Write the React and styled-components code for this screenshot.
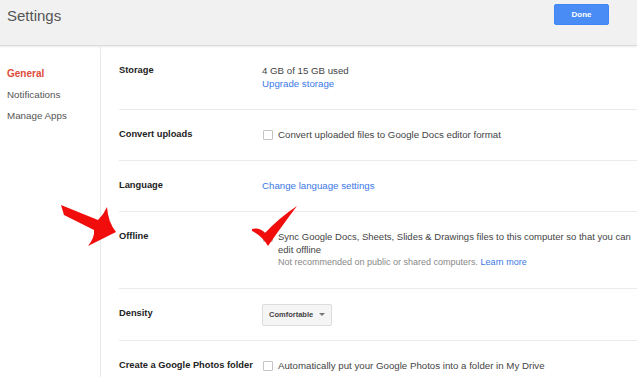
import React from 'react';
import styled, { createGlobalStyle } from 'styled-components';

const GlobalStyle = createGlobalStyle`
    body {
        margin: 0;
        background: #fff;
        font-family: "Liberation Sans", Arial, sans-serif;
        color: #444;
    }
`;

const menu = [
    { name: 'General', active: true },
    { name: 'Notifications' },
    { name: 'Manage Apps' },
];

function Checkbox() {
    return <Box />;
}

function App() {
    return (
        <Page>
            <GlobalStyle />
            <Header>
                <Title>Settings</Title>
                <DoneButton>Done</DoneButton>
            </Header>
            <Body>
                <Sidebar>
                    {menu.map(item => (
                        <MenuItem key={item.name} active={item.active}>{item.name}</MenuItem>
                    ))}
                </Sidebar>
                <Content>
                    <Row>
                        <Label>Storage</Label>
                        <Value>
                            <Line>4 GB of 15 GB used</Line>
                            <Link>Upgrade storage</Link>
                        </Value>
                    </Row>
                    <Row>
                        <Label>Convert uploads</Label>
                        <Value>
                            <CheckLine>
                                <Checkbox />
                                <span>Convert uploaded files to Google Docs editor format</span>
                            </CheckLine>
                        </Value>
                    </Row>
                    <Row>
                        <Label>Language</Label>
                        <Value>
                            <Link>Change language settings</Link>
                        </Value>
                    </Row>
                    <Row>
                        <Label>Offline</Label>
                        <Value>
                            <CheckLine>
                                <Checkbox />
                                <WideText>
                                    <Line>Sync Google Docs, Sheets, Slides &amp; Drawings files to this computer so that you can edit offline</Line>
                                    <Hint>Not recommended on public or shared computers. <Link>Learn more</Link></Hint>
                                </WideText>
                            </CheckLine>
                        </Value>
                    </Row>
                    <Row>
                        <Label>Density</Label>
                        <Value>
                            <Select>
                                Comfortable
                                <Caret />
                            </Select>
                        </Value>
                    </Row>
                    <Row>
                        <Label>Create a Google Photos folder</Label>
                        <Value>
                            <CheckLine>
                                <Checkbox />
                                <span>Automatically put your Google Photos into a folder in My Drive</span>
                            </CheckLine>
                        </Value>
                    </Row>
                </Content>
            </Body>
            <Marks width="640" height="377" viewBox="0 0 640 377">
                <path
                    d="M61,205 L98,220 Q104,214 107,207 Q108,222 116,232 L88,246 Q95,237 94,230 L64,215 Z"
                    fill="#f20d0d"
                />
                <path
                    d="M252,229 Q260,227 265,233 Q279,218 297,206 Q284,223 268,246 Q262,236 252,231 Z"
                    fill="#f20d0d"
                />
            </Marks>
        </Page>
    );
}

const Page = styled.div`
    position: relative;
    width: 637px;
    height: 377px;
    overflow: hidden;
`;
const Header = styled.header`
    height: 45px;
    display: flex;
    align-items: flex-start;
    justify-content: space-between;
    padding: 0 28px 0 7px;
    background: #f1f1f1;
    border-bottom: 1px solid #dadada;
    box-shadow: 0 1px 2px rgba(0, 0, 0, 0.08);
`;
const Title = styled.h1`
    margin: 0;
    font-size: 15px;
    font-weight: 400;
    line-height: 32px;
    color: #555;
`;
const DoneButton = styled.button`
    margin-top: 4px;
    width: 55px;
    height: 21px;
    padding: 0;
    border: 1px solid #3f86f5;
    border-radius: 2px;
    background: #4a8cf6;
    color: #fff;
    font-family: inherit;
    font-size: 8px;
    font-weight: 700;
`;
const Body = styled.div`
    display: flex;
`;
const Sidebar = styled.nav`
    width: 101px;
    flex-shrink: 0;
    min-height: 331px;
    padding-top: 17px;
    box-sizing: border-box;
    border-right: 1px solid #e8e8e8;
`;
const MenuItem = styled.div`
    padding-left: 7px;
    font-size: ${p => (p.active ? '10px' : '9.8px')};
    line-height: 21px;
    font-weight: ${p => (p.active ? 700 : 400)};
    color: ${p => (p.active ? '#dd4b39' : '#555')};
`;
const Content = styled.main`
    flex: 1;
    margin-left: 18px;
`;
const Row = styled.section`
    display: flex;
    padding: 18px 0 19px;
    border-bottom: 1px solid #ebebeb;
    font-size: 9.7px;
    line-height: 13px;
`;
const Label = styled.div`
    width: 143px;
    flex-shrink: 0;
    font-size: 9.3px;
    font-weight: 700;
    color: #222;
`;
const Value = styled.div`
    flex: 1;
    color: #444;
`;
const Line = styled.div``;
const WideText = styled.div`
    margin-right: -8px;
    font-size: 9.5px;
`;
const Link = styled.a`
    display: inline;
    color: #3b78e7;
    cursor: pointer;
`;
const CheckLine = styled.div`
    display: flex;
    align-items: flex-start;
    gap: 5px;
`;
const Box = styled.span`
    flex-shrink: 0;
    width: 8px;
    height: 8px;
    margin: 2px 0 0 1px;
    border: 1px solid #c4c4c4;
    border-radius: 1px;
    background: #fff;
`;
const Hint = styled.div`
    font-size: 9px;
    color: #888;
`;
const Select = styled.div`
    display: inline-flex;
    align-items: center;
    gap: 6px;
    height: 22px;
    margin: -4px 0 -5px;
    padding: 0 6px;
    box-sizing: border-box;
    border: 1px solid #dcdcdc;
    border-radius: 2px;
    background: #f5f5f5;
    font-size: 7.5px;
    font-weight: 700;
    color: #444;
`;
const Caret = styled.span`
    width: 0;
    height: 0;
    border-left: 3px solid transparent;
    border-right: 3px solid transparent;
    border-top: 3px solid #777;
`;
const Marks = styled.svg`
    position: absolute;
    left: 0;
    top: 0;
    pointer-events: none;
`;

export default App;
